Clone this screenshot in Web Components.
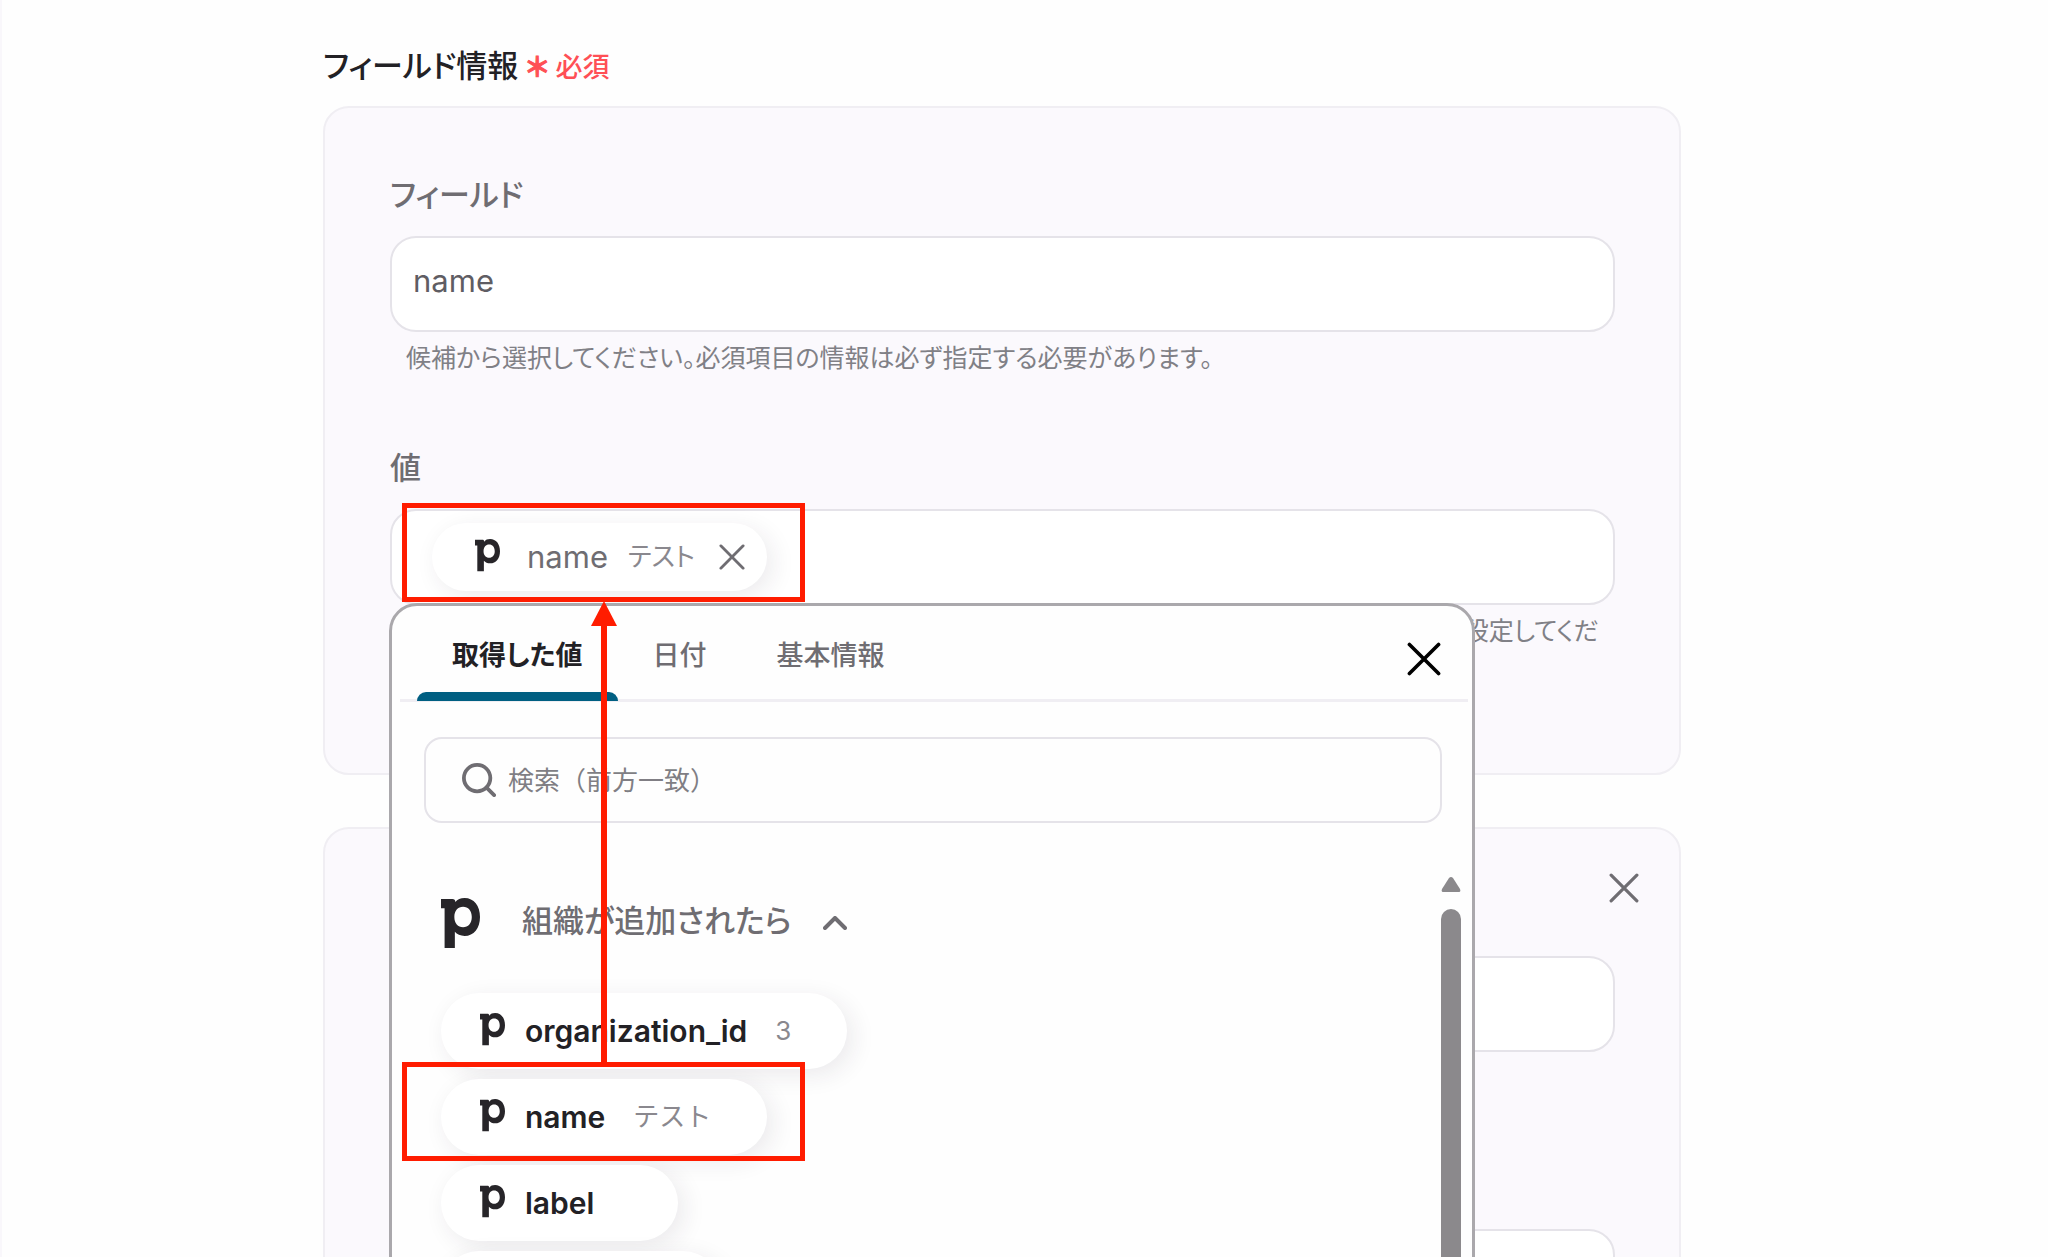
<!DOCTYPE html>
<html lang="ja">
<head>
<meta charset="utf-8">
<title>フィールド情報</title>
<style>
  html {
    background: #fefefe;
  }
  body {
    margin: 0;
    overflow: hidden;
    font-family: Inter, "Noto Sans CJK JP", sans-serif;
    font-feature-settings: "palt";
    color: #222125;
    --muted: #6f6d72;
    --line: #e5e3e9;
    --panel: #fbf9fd;
    --accent: #005f82;
    --mark: #ff1c00;
  }
</style>
</head>
<body>
<mapping-page></mapping-page>

<script>
const icons = {
  close: '<svg viewBox="0 0 28 28" fill="none" stroke="currentColor" stroke-width="3" stroke-linecap="round"><path d="M2 2l24 24M26 2L2 26"/></svg>',
  search: '<svg viewBox="0 0 36 36" fill="none" stroke="currentColor" stroke-width="4" stroke-linecap="round"><circle cx="16" cy="16" r="14"/><path d="M26 26l8 8"/></svg>',
  chevron: '<svg viewBox="0 0 24 14" fill="none" stroke="currentColor" stroke-width="4" stroke-linecap="round" stroke-linejoin="round"><path d="M2 12L12 2l10 10"/></svg>',
  service: '<svg viewBox="0 0 38 49" fill="#272529" fill-rule="evenodd"><path d="M0 1H11C13 1 14 2 14 4C16 1 19 0 23 0C32 0 38 7.500 38 18.500C38 29.500 32 37 23 37C19 37 15.500 35.500 13.500 33V49H3.500V10H0ZM21.500 8.500C16.500 8.500 13 12.500 13 18.500S16.500 28.500 21.500 28.500S30 24.500 30 18.500S26.500 8.500 21.500 8.500Z"/></svg>',
};

const base = `
  * { box-sizing: border-box; }
  button {
    margin: 0;
    padding: 0;
    border: 0;
    background: none;
    color: inherit;
    font: inherit;
    font-feature-settings: inherit;
    cursor: pointer;
  }
  svg { display: block; width: 100%; height: auto; }
`;

class FieldPanel extends HTMLElement {
  constructor() {
    super();
    this.attachShadow({ mode: 'open' });
  }

  connectedCallback() {
    this.shadowRoot.innerHTML = `
      <style>
        ${base}
        :host {
          display: flex;
          flex-direction: column;
          box-sizing: border-box;
          padding: 64px 64px 124px 65px;
          border: 2px solid #f0eef3;
          border-radius: 26px;
          background: var(--panel);
        }
        .bar {
          display: flex;
          justify-content: flex-end;
          margin: -20px -24px 53px 0;
        }
        .remove {
          width: 30px;
          color: var(--muted);
        }
      </style>
      ${this.hasAttribute('removable')
        ? `<div class="bar"><button class="remove" aria-label="削除">${icons.close}</button></div>`
        : ''}
      <slot></slot>
    `;
  }
}

class FormField extends HTMLElement {
  constructor() {
    super();
    this.attachShadow({ mode: 'open' });
  }

  connectedCallback() {
    const label = this.getAttribute('label');
    const value = this.getAttribute('value') || '';
    const boxed = this.hasAttribute('boxed');

    this.shadowRoot.innerHTML = `
      <style>
        ${base}
        :host {
          display: block;
          position: relative;
        }
        label, .label {
          display: block;
          height: 44px;
          padding-top: 1px;
          margin-bottom: 20px;
          color: var(--muted);
          font-size: 31px;
          font-weight: 500;
          line-height: 44px;
        }
        input, .box {
          display: flex;
          align-items: center;
          width: 100%;
          height: 96px;
          padding: 0 21px 8px;
          border: 2px solid var(--line);
          border-radius: 26px;
          background: #fff;
          color: #5f5d63;
          font: inherit;
          font-size: 31px;
        }
        .box { padding: 0 40px; }
        .hint {
          display: block;
          height: 36px;
          margin: 8px 16px 0;
          color: #808086;
          font-size: 25px;
          line-height: 36px;
        }
        :host([hint-end]) .hint { text-align: right; }
      </style>
      ${label ? (boxed ? `<div class="label">${label}</div>` : `<label for="text">${label}</label>`) : ''}
      ${boxed ? '<div class="box"><slot></slot></div>' : `<input id="text" type="text" value="${value}" ${label ? '' : 'aria-label="値"'}>`}
      ${this.hasAttribute('hint') ? `<div class="hint">${this.getAttribute('hint')}</div>` : ''}
      <slot name="popup"></slot>
    `;
  }
}

class ValueChip extends HTMLElement {
  constructor() {
    super();
    this.attachShadow({ mode: 'open' });
  }

  connectedCallback() {
    const selected = this.hasAttribute('selected');
    const sample = this.getAttribute('sample') || '';
    const body = `
      <span class="logo">${icons.service}</span>
      <span class="name"><slot></slot></span>
      <span class="sample">${sample}</span>
    `;

    this.shadowRoot.innerHTML = `
      <style>
        ${base}
        :host { display: flex; }
        .chip {
          display: flex;
          align-items: center;
          height: 76px;
          padding: 0 56px 0 39px;
          border-radius: 38px;
          background: #fff;
          box-shadow: 6px 6px 24px rgba(40, 30, 60, 0.09);
        }
        :host([empty]) .chip { width: 280px; }
        .logo {
          width: 25px;
          margin: 0 20px 3px 0;
        }
        .name {
          font-size: 30px;
          font-weight: 600;
          line-height: 44px;
        }
        .sample {
          margin-left: 28px;
          color: #8a888e;
          font-size: 26px;
          font-feature-settings: normal;
          line-height: 44px;
        }
        .selected {
          height: 68px;
          padding: 0 22px 0 43px;
        }
        .selected .logo { margin-right: 27px; }
        .selected .name {
          color: var(--muted);
          font-size: 31px;
          font-weight: 400;
        }
        .selected .sample {
          margin-left: 20px;
          font-feature-settings: "palt";
        }
        .remove {
          width: 26px;
          margin-left: 24px;
          color: var(--muted);
        }
      </style>
      ${selected
        ? `<div class="chip selected">${body}<button class="remove" aria-label="値を削除">${icons.close}</button></div>`
        : `<button class="chip">${body}</button>`}
    `;
  }
}

class ValuePicker extends HTMLElement {
  constructor() {
    super();
    this.attachShadow({ mode: 'open' });
  }

  connectedCallback() {
    this.shadowRoot.innerHTML = `
      <style>
        ${base}
        :host {
          position: absolute;
          z-index: 1;
          top: 158px;
          left: -1px;
          right: 140px;
          box-sizing: border-box;
          height: 760px;
          border: 3px solid #aaa8ac;
          border-radius: 28px;
          background: #fefefe;
        }
        header {
          display: flex;
          align-items: center;
          justify-content: space-between;
          height: 96px;
          margin: 0 4px 0 8px;
          padding: 0 27px 0 17px;
          border-bottom: 3px solid #f0eef3;
        }
        nav {
          display: flex;
          align-self: stretch;
        }
        nav button {
          position: relative;
          height: 95px;
          padding: 4px 35px;
          color: var(--muted);
          font-size: 27px;
          font-weight: 500;
        }
        nav button[aria-selected="true"] {
          color: #222125;
          font-weight: 700;
        }
        nav button[aria-selected="true"]::after {
          content: "";
          position: absolute;
          left: 0;
          right: 0;
          bottom: 0;
          height: 9px;
          border-radius: 9px 9px 0 0;
          background: var(--accent);
        }
        .close {
          width: 34px;
          margin-top: 12px;
          color: #000;
        }
        .search {
          display: flex;
          align-items: center;
          height: 86px;
          margin: 35px 30px 50px 32px;
          padding: 0 36px;
          border: 2px solid var(--line);
          border-radius: 18px;
        }
        .search label {
          width: 34px;
          margin-right: 12px;
          color: var(--muted);
        }
        .search input {
          flex: 1;
          min-width: 0;
          padding: 0;
          border: 0;
          outline: 0;
          background: none;
          font: inherit;
          font-size: 26px;
          font-feature-settings: normal;
        }
        .search input::placeholder {
          color: #807e84;
          opacity: 1;
        }
        .results {
          display: flex;
          justify-content: space-between;
          padding: 0 11px 0 49px;
        }
        .group {
          display: flex;
          align-items: flex-start;
          height: 50px;
          margin: 25px 0 45px;
          color: var(--muted);
          font-size: 31px;
          font-weight: 500;
          line-height: 46px;
        }
        .group .logo {
          width: 39px;
          margin-right: 42px;
        }
        .group .arrow {
          width: 24px;
          margin: 18px 0 0 32px;
        }
        .items {
          display: flex;
          flex-direction: column;
          gap: 10px;
        }
        .scroll {
          display: flex;
          flex-direction: column;
          gap: 17px;
          width: 20px;
          padding-top: 4px;
          color: #8b898c;
        }
        .thumb {
          flex: 1;
          border-radius: 10px;
          background: currentColor;
        }
      </style>
      <header>
        <nav role="tablist">
          <button role="tab" aria-selected="true">取得した値</button>
          <button role="tab">日付</button>
          <button role="tab">基本情報</button>
        </nav>
        <button class="close" aria-label="閉じる">${icons.close}</button>
      </header>
      <div class="search">
        <label for="query" aria-label="検索">${icons.search}</label>
        <input id="query" type="text" placeholder="検索（前方一致）">
      </div>
      <div class="results">
        <div>
          <button class="group" aria-expanded="true">
            <span class="logo">${icons.service}</span>
            <span><slot name="title"></slot></span>
            <span class="arrow">${icons.chevron}</span>
          </button>
          <div class="items"><slot></slot></div>
        </div>
        <div class="scroll">
          <svg viewBox="0 0 20 15" fill="currentColor"><path d="M8 1Q10-1 12 1L19 12Q20 15 18 15H2Q0 15 1 12Z"/></svg>
          <div class="thumb"></div>
        </div>
      </div>
    `;
  }
}

// Red frames on the picked value and its source, joined by an arrow.
class StepMarks extends HTMLElement {
  constructor() {
    super();
    this.attachShadow({ mode: 'open' });
  }

  connectedCallback() {
    this.shadowRoot.innerHTML = `
      <style>
        :host {
          position: absolute;
          z-index: 2;
          top: 503px;
          left: 400px;
          pointer-events: none;
        }
        svg { display: block; }
      </style>
      <svg width="404" height="660" fill="none" stroke="var(--mark)" stroke-width="5">
        <rect x="2.500" y="2.500" width="398" height="94"/>
        <rect x="2.500" y="561.500" width="398" height="94"/>
        <path d="M202 560V120" stroke-width="6"/>
        <path d="M202 98l13 25h-26z" fill="var(--mark)" stroke="none"/>
      </svg>
    `;
  }
}

class MappingPage extends HTMLElement {
  constructor() {
    super();
    this.attachShadow({ mode: 'open' });
  }

  connectedCallback() {
    this.shadowRoot.innerHTML = `
      <style>
        ${base}
        :host {
          display: block;
          position: relative;
          height: 100vh;
          overflow: hidden;
          border-left: 2px solid #f9f7fb;
          box-sizing: border-box;
        }
        main {
          display: flex;
          flex-direction: column;
          padding: 44px 367px 0 321px;
        }
        h1 {
          display: flex;
          align-items: center;
          gap: 8px;
          height: 44px;
          margin: 0 0 18px;
          font-size: 31px;
          font-weight: 500;
          line-height: 44px;
        }
        .required {
          padding-top: 3px;
          color: #ff4f55;
          font-size: 27px;
        }
        .required b { -webkit-text-stroke: 1px; }
        field-panel { margin-bottom: 52px; }
        form-field + form-field { margin-top: 69px; }
        .next form-field + form-field { margin-top: 177px; }
      </style>
      <main>
        <h1>フィールド情報 <span class="required"><b>＊</b> 必須</span></h1>
        <field-panel>
          <form-field label="フィールド" value="name"
            hint="候補から選択してください。必須項目の情報は必ず指定する必要があります。"></form-field>
          <form-field label="値" boxed hint-end hint="設定してくだ">
            <value-chip selected sample="テスト">name</value-chip>
            <value-picker slot="popup">
              <span slot="title">組織が追加されたら</span>
              <value-chip sample="3">organization_id</value-chip>
              <value-chip sample="テスト">name</value-chip>
              <value-chip>label</value-chip>
              <value-chip empty></value-chip>
            </value-picker>
          </form-field>
        </field-panel>
        <field-panel class="next" removable>
          <form-field></form-field>
          <form-field></form-field>
        </field-panel>
      </main>
      <step-marks></step-marks>
    `;
  }
}

customElements.define('field-panel', FieldPanel);
customElements.define('form-field', FormField);
customElements.define('value-chip', ValueChip);
customElements.define('value-picker', ValuePicker);
customElements.define('step-marks', StepMarks);
customElements.define('mapping-page', MappingPage);
</script>
</body>
</html>
